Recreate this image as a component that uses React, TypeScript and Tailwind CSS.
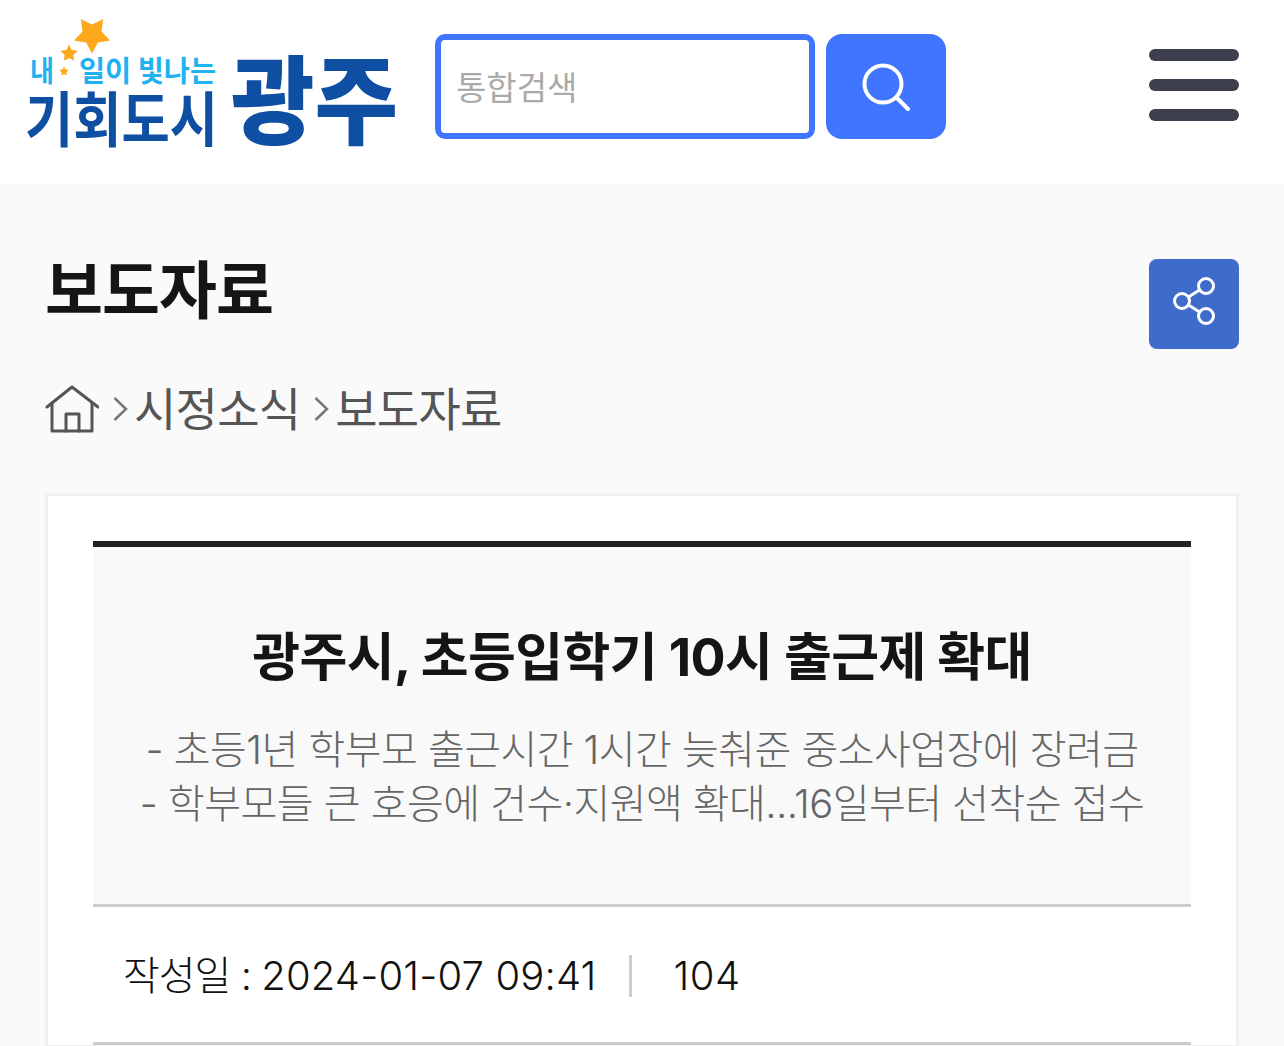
const font = "font-['Inter','Noto_Sans_CJK_KR',sans-serif]";

// points of a five pointed star, for the logo
function star(cx: number, cy: number, outer: number, inner: number, rot: number) {
  const pts: string[] = [];
  for (let i = 0; i < 10; i++) {
    const r = i % 2 === 0 ? outer : inner;
    const a = ((rot + i * 36 - 90) * Math.PI) / 180;
    pts.push(`${(cx + r * Math.cos(a)).toFixed(1)},${(cy + r * Math.sin(a)).toFixed(1)}`);
  }
  return pts.join(" ");
}

function Logo() {
  return (
    <svg width="372" height="136" viewBox="0 0 372 136" className="shrink-0 overflow-visible">
      <g fill="#fea81d">
        <polygon points={star(67, 15.5, 19, 10, 36)} />
        <polygon points={star(44, 34.5, 9, 4.5, 0)} />
        <polygon points={star(39, 52.5, 5, 2.5, 0)} />
      </g>
      <g fontFamily="'Noto Sans CJK KR', sans-serif" fontWeight="700">
        <text x="5" y="63" fontSize="29" fill="#1fb2ee" textLength="24" lengthAdjust="spacingAndGlyphs">내</text>
        <text x="54" y="63" fontSize="29" fill="#1fb2ee" textLength="137" lengthAdjust="spacingAndGlyphs">일이 빛나는</text>
        <text x="0" y="123" fontSize="60" fill="#0e4fa3" textLength="193" lengthAdjust="spacingAndGlyphs">기회도시</text>
        <text x="206" y="117" fontSize="96" fontWeight="900" fill="#0e4fa3" textLength="167" lengthAdjust="spacingAndGlyphs">광주</text>
      </g>
    </svg>
  );
}

function SearchIcon() {
  return (
    <svg width="50" height="50" viewBox="0 0 50 50" fill="none" stroke="#fff" strokeWidth="4" strokeLinecap="round">
      <circle cx="22" cy="22" r="18.5" />
      <path d="M35.500 35.500L47 47" />
    </svg>
  );
}

function ShareIcon() {
  return (
    <svg width="44" height="50" viewBox="0 0 44 50" fill="none" stroke="#fff" strokeWidth="3" className="-translate-y-[4px] translate-x-[1px]">
      <circle cx="33" cy="11" r="7.500" />
      <circle cx="9" cy="26" r="7.500" />
      <circle cx="33" cy="41" r="7.500" />
      <path d="M15.500 22L26.500 15M15.500 30L26.500 37" />
    </svg>
  );
}

function HomeIcon() {
  return (
    <svg width="54" height="48" viewBox="0 0 54 48" fill="none" stroke="#555" strokeWidth="3" strokeLinejoin="round" strokeLinecap="round" className="shrink-0">
      <path d="M2 22L27 2L53 22" />
      <path d="M7 18V46H47V18" />
      <path d="M21 46V29H34V46" />
    </svg>
  );
}

function Chevron() {
  return (
    <svg width="15" height="26" viewBox="0 0 15 26" fill="none" stroke="#777" strokeWidth="2.500" className="ml-[14px] mr-[6px] shrink-0">
      <path d="M1.500 2L13 13L1.500 24" />
    </svg>
  );
}

export default function App() {
  return (
    <div className={`h-[1046px] overflow-hidden bg-[#fafafa] ${font}`}>
      <header className="flex h-[184px] items-center bg-white pb-[11px] pl-[25px] pr-[45px]">
        <Logo />
        <div className="ml-[38px] flex h-[105px] w-[380px] items-center rounded-[10px] border-[6px] border-[#4075ff] bg-white pl-[15px] pt-[5px] text-[33px] text-[#aaaaaa]">
          통합검색
        </div>
        <button className="ml-[11px] flex h-[105px] w-[120px] items-center justify-center rounded-[16px] bg-[#4075ff]">
          <SearchIcon />
        </button>
        <button className="mb-[3px] ml-auto flex w-[90px] flex-col gap-[18px]">
          <span className="h-[12px] rounded-full bg-[#3e3f4e]" />
          <span className="h-[12px] rounded-full bg-[#3e3f4e]" />
          <span className="h-[12px] rounded-full bg-[#3e3f4e]" />
        </button>
      </header>

      <main className="px-[45px] pt-[75px]">
        <div className="flex items-start justify-between">
          <h1 className="text-[63px] leading-[62px] font-bold tracking-[-1px] text-[#151515]">보도자료</h1>
          <button className="flex size-[90px] items-center justify-center rounded-[8px] bg-[#3f6bcb]">
            <ShareIcon />
          </button>
        </div>

        <nav className="mt-[33px] flex h-[54px] items-center text-[46px] leading-[56px] tracking-[-0.75px] text-[#555555]">
          <HomeIcon />
          <Chevron />
          <span>시정소식</span>
          <Chevron />
          <span>보도자료</span>
        </nav>

        <section className="mt-[57px] border-[3px] border-[#f0f0f0] bg-white px-[45px] pt-[45px]">
          <div className="flex h-[366px] flex-col items-center border-t-[6px] border-b-[3px] border-t-[#222222] border-b-[#cccccc] bg-[#f9f9f9] pt-[76px]">
            <h2 className="text-[52px] leading-[70px] font-bold tracking-[-0.6px] text-[#151515]">
              광주시, 초등입학기 10시 출근제 확대
            </h2>
            <p className="mt-[30px] text-center text-[40px] leading-[54px] font-light tracking-[-0.55px] text-[#666666]">
              - 초등1년 학부모 출근시간 1시간 늦춰준 중소사업장에 장려금
              <br />
              - 학부모들 큰 호응에 건수·지원액 확대...16일부터 선착순 접수
            </p>
          </div>
          <div className="flex h-[138px] items-center border-b-[3px] border-b-[#cccccc] pl-[30px] pt-[2px] text-[40px] font-light text-[#111111]">
            <span className="whitespace-pre tracking-[-1px]">작성일 : </span>
            <span className="tracking-[0.15px]">2024-01-07 09:41</span>
            <span className="ml-[33px] mr-[41px] h-[42px] w-[3px] bg-[#cccccc]" />
            <span className="tracking-[0.5px]">104</span>
          </div>
        </section>
      </main>
    </div>
  );
}
